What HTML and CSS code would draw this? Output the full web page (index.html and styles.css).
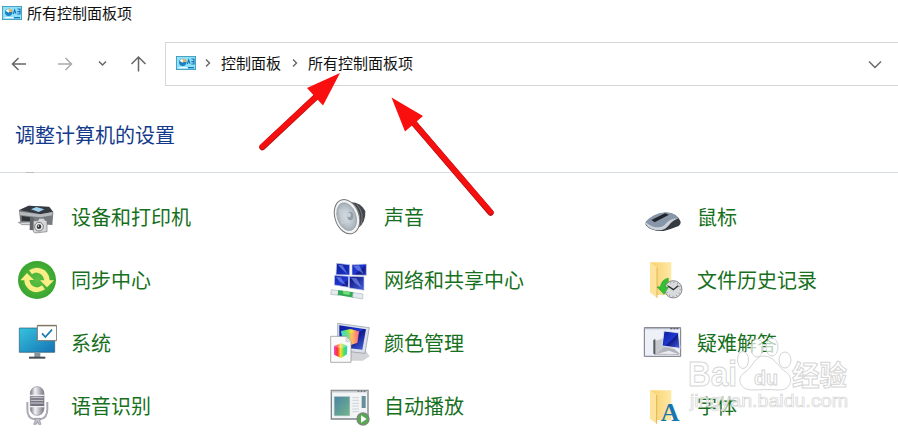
FILE: index.html
```html
<!DOCTYPE html>
<html lang="zh-CN">
<head>
<meta charset="utf-8">
<title>所有控制面板项</title>
<link rel="stylesheet" href="styles.css">
</head>
<body>
<svg class="defs" width="0" height="0" aria-hidden="true">
  <defs>
    <symbol id="panel" viewBox="0 0 60 42">
      <rect x="1" y="1" width="58" height="40" fill="#8fe0fa" stroke="#3794b8" stroke-width="3"/>
      <circle cx="20" cy="19" r="11" fill="#1c7fc4"/>
      <path d="M21 19V7a12 12 0 0 1 10 10z" fill="#f4b64a"/>
      <path d="M21 20l-10-5a11 11 0 0 1 9-7z" fill="#fff"/>
      <path d="M34 24l4-12 4 11M46 9h8v8h-8M46 24h8v-7" stroke="#1675b5" stroke-width="3.500" fill="none"/>
      <path d="M8 35h26" stroke="#fff" stroke-width="3"/>
      <path d="M36 35h18" stroke="#1779b5" stroke-width="4"/>
    </symbol>
    <linearGradient id="blue" x1="0" y1="0" x2="1" y2="1"><stop stop-color="#0a1a9a"/><stop offset=".5" stop-color="#2038d0"/><stop offset=".55" stop-color="#101a8c"/><stop offset="1" stop-color="#4c68e0"/></linearGradient>
    <linearGradient id="metal"><stop stop-color="#777780"/><stop offset=".35" stop-color="#f4f4f8"/><stop offset="1" stop-color="#777783"/></linearGradient>
    <linearGradient id="screen" x1="0" y1="0" x2="1" y2="1"><stop stop-color="#35c3de"/><stop offset="1" stop-color="#1573b4"/></linearGradient>
    <linearGradient id="folder"><stop stop-color="#f6d16d"/><stop offset="1" stop-color="#ffe9a6"/></linearGradient>
    <linearGradient id="rainbow"><stop stop-color="#36d9e8"/><stop offset=".3" stop-color="#68e65a"/><stop offset=".6" stop-color="#ffe33f"/><stop offset="1" stop-color="#f0438a"/></linearGradient>
    <linearGradient id="rainbow2"><stop stop-color="#e84bd8"/><stop offset=".25" stop-color="#fb3030"/><stop offset=".5" stop-color="#ffe02e"/><stop offset=".75" stop-color="#4be05a"/><stop offset="1" stop-color="#37c8d8"/></linearGradient>
    <linearGradient id="teal" x1="0" y1="0" x2="1" y2="1"><stop stop-color="#4a83a5"/><stop offset="1" stop-color="#72b58a"/></linearGradient>
    <radialGradient id="cone"><stop stop-color="#dfe8ee"/><stop offset="1" stop-color="#a5afb7"/></radialGradient>
    <radialGradient id="green"><stop stop-color="#5cc043"/><stop offset="1" stop-color="#39a52f"/></radialGradient>
  </defs>
</svg>

<header class="titlebar">
  <svg class="panel-icon"><use href="#panel"/></svg>
  <span>所有控制面板项</span>
</header>

<nav class="toolbar">
  <svg class="nav-icons" viewBox="0 0 165 44">
    <g fill="none" stroke-width="1.500">
      <path d="M26 22H12.500M18.500 16l-6 6 6 6" stroke="#666"/>
      <path d="M58 22H71.500M65.500 16l6 6-6 6" stroke="#aaa"/>
      <path d="M99 19.500l3.500 3.500 3.500-3.500" stroke="#666"/>
      <path d="M138.500 29.500V15M131.500 22l7-7 7 7" stroke="#666"/>
    </g>
  </svg>
  <div class="address">
    <svg class="panel-icon"><use href="#panel"/></svg>
    <svg class="sep" viewBox="0 0 6 10"><path d="M1 1.500L4.500 5 1 8.500"/></svg>
    <span>控制面板</span>
    <svg class="sep sep-second" viewBox="0 0 6 10"><path d="M1 1.500L4.500 5 1 8.500"/></svg>
    <span>所有控制面板项</span>
    <svg class="dropdown" viewBox="0 0 14 10"><path d="M1 1.500l6 6 6-6"/></svg>
  </div>
</nav>

<section class="heading"><h1>调整计算机的设置</h1></section>

<main class="items">
  <a class="item">
    <svg viewBox="0 0 120 120">
      <path d="M6 39L34 26 97 29 109 45 106 84 10 78z" fill="#777b80"/>
      <path d="M8 39L36 26 96 30 108 45 70 52z" fill="#34393f"/>
      <path d="M42 37l16-7 24 7-17 8z" fill="#9fd2ef"/>
      <path d="M8 44l62 8 36-7v10l-36 6-62-7z" fill="#b6b9bc"/>
      <path d="M14 57l26 4v12l-26-2z" fill="#303338"/>
      <path d="M4 76l34-1 10 8H15z" fill="#d8dadd" stroke="#777" stroke-width="2"/>
      <path d="M39 60l11 2 4 38-16-1z" fill="#606369"/>
      <path d="M49 72l14-1 4-7h13l4 6 6 1v33l-36 4-5-4z" fill="#d5d6d8" stroke="#777" stroke-width="2"/>
      <circle cx="66" cy="89" r="13" fill="#ececee" stroke="#777" stroke-width="3"/>
      <circle cx="66" cy="89" r="7" fill="#383b40"/><circle cx="64" cy="87" r="2" fill="#fff"/>
    </svg>
    <span>设备和打印机</span>
  </a>
  <a class="item">
    <svg viewBox="0 0 120 120">
      <path d="M54 16Q91 12 106 42 108 76 84 94L58 104z" fill="#42454a"/>
      <path d="M70 20q28 29 15 73M80 22q25 27 12 64" fill="none" stroke="#777b80" stroke-width="3"/>
      <ellipse cx="51" cy="59" rx="36" ry="53" transform="rotate(-19 51 59)" fill="#f2f3f4" stroke="#777" stroke-width="3"/>
      <ellipse cx="50" cy="59" rx="28" ry="43" transform="rotate(-19 50 59)" fill="url(#cone)" stroke="#999fa5" stroke-width="2"/>
      <path d="M25 35l36 8v28L34 84z" fill="#c8d0d6" opacity=".6"/>
      <ellipse cx="61" cy="57" rx="9" ry="13" fill="#929da6"/><ellipse cx="57" cy="54" rx="5" ry="7" fill="#cbd6de"/>
    </svg>
    <span>声音</span>
  </a>
  <a class="item">
    <svg viewBox="0 0 120 120">
      <path d="M8 76Q30 50 66 47 102 46 113 74q1 8-6 13-22 9-45 15Q24 104 8 84z" fill="#363b42"/>
      <path d="M8 74Q30 50 66 46 90 44 108 64 84 66 72 80 60 96 44 93 18 90 8 74z" fill="#8797a9"/>
      <path d="M8 75q18 17 38 16 14 0 24-13 12-14 37-14-19 7-28 19-13 17-30 17Q20 100 8 81z" fill="#c9d0d7"/>
      <path d="M25 69l41-20 12 4-43 23z" fill="#22262c"/>
    </svg>
    <span>鼠标</span>
  </a>

  <a class="item">
    <svg viewBox="0 0 120 120">
      <circle cx="60" cy="60" r="57" fill="url(#green)"/>
      <g fill="#fbee86">
        <path d="M36 31Q60 15 83 31q14 12 15 30h13L90 82 69 61h13Q79 41 60 38q-8-1-15 5z"/>
        <path d="M84 88Q60 105 37 89 22 77 22 61H10L30 39 51 60H37q3 19 21 22 9 1 17-6z"/>
      </g>
    </svg>
    <span>同步中心</span>
  </a>
  <a class="item">
    <svg viewBox="0 0 120 120">
      <g fill="url(#blue)" stroke="#c4cbe5" stroke-width="2">
        <path d="M20 10l39 4v31l-41-1zM66 14l43-2v34l-43-1zM14 46l42 3-1 33-42-7zM58 49l44 1v41l-44-7z"/>
      </g>
      <path d="M23 14l15 2 14 26-16-14zM69 17l18-1 14 26-22-14zM18 51l14 1 15 23-18-10zM62 53l17 1 16 29-21-15z" fill="#8ea4f4" opacity=".55"/>
      <path d="M4 89l24 3-1 14-25-3z" fill="#e4ebee" stroke="#a9b7bd" stroke-width="2"/>
      <path d="M25 90l46 7v16l-48-8z" fill="#31a957"/><path d="M39 93l20 3v9l-19-3z" fill="#78df7a"/>
      <path d="M69 98l30 4-1 15-30-5z" fill="#e4ebee" stroke="#a9b7bd" stroke-width="2"/>
    </svg>
    <span>网络和共享中心</span>
  </a>
  <a class="item">
    <svg viewBox="0 0 120 120">
      <path d="M22 7h63v98H38L22 97z" fill="url(#folder)"/><path d="M22 7l20 16v91L22 98z" fill="#ffe39b"/><path d="M42 23v90" stroke="#deb657" stroke-width="3"/>
      <circle cx="91" cy="88" r="26" fill="#d9dadc" stroke="#888b8f" stroke-width="3"/>
      <circle cx="91" cy="88" r="21" fill="none" stroke="#555" stroke-width="3" stroke-dasharray="2 9"/>
      <path d="M75 78l16 11 15-12" fill="none" stroke="#292d32" stroke-width="4"/>
      <path d="M76 54q-21 5-24 26l-10 1 21 22 14-22H66q2-11 10-16z" fill="#36be36" stroke="#299b2b" stroke-width="1.500"/>
    </svg>
    <span>文件历史记录</span>
  </a>

  <a class="item">
    <svg viewBox="0 0 120 120">
      <path d="M7 15h106v73H7z" fill="url(#screen)" stroke="#28586c" stroke-width="2"/>
      <path d="M52 89h18v13H52z" fill="#87959d"/><path d="M36 101h49v6H36z" fill="#454c52"/>
      <path d="M61 7h58v46H61z" fill="#fff" stroke="#7b776b" stroke-width="3"/><path d="M62 8h56" stroke="#807865" stroke-width="4"/>
      <path d="M75 31l10 11 20-22" fill="none" stroke="#1679b3" stroke-width="5"/>
    </svg>
    <span>系统</span>
  </a>
  <a class="item">
    <svg viewBox="0 0 120 120">
      <path d="M60 85l46-4 13 19-20 13H46z" fill="#d2d4d7"/>
      <path d="M23 1l95 13-13 77-82-9z" fill="#dce1ea" stroke="#8d929d" stroke-width="2"/>
      <path d="M28 7l80 12-11 61-69-8z" fill="url(#blue)"/>
      <path d="M33 24l28-6 26 7-5 34-23 8-19-9z" fill="url(#rainbow)"/><path d="M33 24l26 7v35l-19-8z" fill="#62d6b4" opacity=".5"/><path d="M59 31l28-6-5 34-23 8z" fill="#ff9980" opacity=".5"/>
      <path d="M2 40h46l15 15v63H2z" fill="#fafafa" stroke="#888" stroke-width="2"/><path d="M48 40v16h15" fill="#e2e2e2" stroke="#aaa"/>
      <path d="M12 69l22-8 18 8-1 25-18 11-21-10z" fill="url(#rainbow2)"/><path d="M12 69l22-8 18 8-19 8z" fill="#fff" opacity=".3"/>
    </svg>
    <span>颜色管理</span>
  </a>
  <a class="item">
    <svg viewBox="0 0 120 120">
      <path d="M4 14h109v86H4z" fill="#edf0f7" stroke="#737581" stroke-width="3"/><path d="M5 17h107" stroke="#b3b8c5" stroke-width="4"/><path d="M82 17h25" stroke="#555b70" stroke-width="4" stroke-dasharray="6 3"/>
      <path d="M34 54l32-9 20 28-15 23H36z" fill="#c6c8ce"/><path d="M31 51l6-3v47l-6-3z" fill="#555963"/>
      <path d="M63 24l43 5 5 47-54-7z" fill="url(#blue)" stroke="#dce1ed" stroke-width="3"/>
      <path d="M63 73l30 4 18 15-5 4-66-2z" fill="#b2b4bb"/><path d="M44 92l34-9 27 10z" fill="#ececef"/>
    </svg>
    <span>疑难解答</span>
  </a>

  <a class="item">
    <svg viewBox="0 0 120 120">
      <path d="M31 48v20q0 28 19 31h21q20-3 20-31V48" fill="none" stroke="#aaa9b5" stroke-width="6"/>
      <rect x="40" y="2" width="41" height="86" rx="20" fill="url(#metal)" stroke="#8b8995" stroke-width="2"/>
      <path d="M41 31h39v29H41z" fill="#75737e"/><path d="M42 35h37M42 43h37M42 51h37" stroke="#d2d1da" stroke-width="3"/>
      <path d="M39 28h43M39 62h43" stroke="#efeff3" stroke-width="4"/>
      <path d="M54 97h15v9l3 9h-8l-3-9-3 9h-8l4-10z" fill="#c1c0cb" stroke="#8c8b95" stroke-width="2"/>
    </svg>
    <span>语音识别</span>
  </a>
  <a class="item">
    <svg viewBox="0 0 120 120">
      <path d="M4 13h110v86H4z" fill="#f2f4f5" stroke="#7e8589" stroke-width="4"/><path d="M5 17h108" stroke="#c5cbd0" stroke-width="5"/><path d="M83 16h24" stroke="#59636a" stroke-width="3" stroke-dasharray="5 4"/>
      <path d="M13 32h46v57H13z" fill="url(#teal)" stroke="#8ea9a4"/><path d="M67 35h20M67 43h20M67 52h20M67 60h20M67 69h20M67 77h20" stroke="#ccd3d8" stroke-width="3"/><path d="M95 30h12v36H95z" fill="#668d9a"/>
      <circle cx="99" cy="99" r="18" fill="#58a753" stroke="#798b78" stroke-width="4"/><path d="M93 88l17 11-17 11z" fill="#fff"/>
    </svg>
    <span>自动播放</span>
  </a>
  <a class="item">
    <svg viewBox="0 0 120 120">
      <path d="M22 13h63v89H38l-16-4z" fill="url(#folder)"/><path d="M22 13l19 14v87L22 99z" fill="#ffe39b"/><path d="M41 27v86" stroke="#deb657" stroke-width="3"/>
      <text class="font-letter" x="53" y="105" textLength="56" lengthAdjust="spacingAndGlyphs">A</text>
    </svg>
    <span>字体</span>
  </a>
</main>

<svg class="arrows" viewBox="0 0 898 433">
  <g stroke="#a80d0d" stroke-width="6.500" stroke-linecap="round"><path d="M262.500 147L318 95M490.500 212.500L413 122"/></g>
  <g stroke="#f50f0f" stroke-width="5.500" stroke-linecap="round"><path d="M262.500 146.500L318 95M490.500 212L413 122"/></g>
  <path d="M340 73L307 88 323 105.500zM391.500 97.500L423 116 405 131.500z" fill="#fa0f0f"/>
</svg>

<svg class="watermark" viewBox="0 0 170 84">
  <g class="mark">
    <text class="wm-latin" x="5" y="55" textLength="49" lengthAdjust="spacingAndGlyphs">Bai</text>
    <ellipse cx="60" cy="29" rx="5.500" ry="8.500"/><ellipse cx="74" cy="17" rx="6" ry="9"/><ellipse cx="89" cy="16" rx="6" ry="9"/><ellipse cx="102" cy="29" rx="6" ry="8"/>
    <path d="M81 25c-10 0-11 12-20 17-8 6-4 17 8 17 8 0 17-1 26 0 12 1 17-11 8-18-8-5-12-16-22-16z"/>
    <text class="wm-du" x="71" y="54" textLength="24" lengthAdjust="spacingAndGlyphs">du</text>
    <text class="wm-cjk" x="109" y="55" textLength="55" lengthAdjust="spacingAndGlyphs">经验</text>
    <text class="wm-url" x="7" y="76" textLength="158" lengthAdjust="spacingAndGlyphs">jingyan.baidu.com</text>
  </g>
</svg>
</body>
</html>
```
FILE: styles.css
```css
* { box-sizing: border-box; }
body {
  margin: 0;
  width: 898px;
  height: 433px;
  overflow: hidden;
  position: relative;
  background: #fff;
  color: #111;
  font-family: "Noto Sans CJK SC", sans-serif;
  font-size: 15px;
}
svg { display: block; flex: none; }
.defs { position: absolute; }
.titlebar {
  height: 28px;
  padding: 0 0 2px 2px;
  display: flex;
  align-items: center;
  gap: 5px;
  line-height: 22px;
}
.panel-icon { width: 20px; height: 14px; }
.toolbar { display: flex; margin-top: 14px; height: 44px; }
.nav-icons { width: 165px; height: 44px; }
.address {
  flex: 1;
  display: flex;
  align-items: center;
  padding: 0 16px 2px 10px;
  border: 1px solid #d4d6d8;
  border-right: 0;
  line-height: 22px;
}
.sep, .dropdown { fill: none; stroke: #666; stroke-width: 1.4; }
.sep { width: 6px; height: 10px; margin: 0 10px 0 9px; }
.sep-second { margin: 0 10px 0 11px; }
.dropdown { width: 14px; height: 10px; margin: 3px 0 0 auto; }
.heading {
  height: 87px;
  padding: 35px 0 0 15px;
  border-bottom: 1px solid #d8dde1;
}
h1 {
  margin: 0;
  font-size: 20px;
  line-height: 28px;
  font-weight: 400;
  color: #143a8c;
}
/* The sliver of the row scrolled under the heading. */
.heading::after {
  content: "";
  display: block;
  width: 8px;
  height: 1px;
  margin: 23px 0 0 11px;
  background: #b9bdc0;
}
.items {
  display: grid;
  grid-template-columns: 313px 313px 1fr;
  grid-auto-rows: 63px;
  height: 260px;
  padding: 12px 0 0 17px;
  overflow: hidden;
}
.item {
  display: flex;
  align-items: center;
  gap: 14px;
  color: #167020;
  font-size: 20px;
  line-height: 28px;
  white-space: nowrap;
}
.item svg { width: 40px; height: 40px; }
.font-letter {
  font: bold 78px "Liberation Serif", serif;
  fill: #1976ad;
}
.arrows { position: absolute; inset: 0; width: 898px; height: 433px; }
.watermark { position: absolute; left: 683px; top: 331px; width: 170px; height: 84px; }
.mark { fill: #fff; fill-opacity: .7; stroke: #d5d5d5; stroke-width: 1; }
.wm-latin { font: bold 35px "Liberation Sans", sans-serif; }
.wm-du { font: bold 20px "Liberation Sans", sans-serif; }
.wm-cjk { font: bold 28px "Noto Sans CJK SC", sans-serif; }
.wm-url { font: 19px "Liberation Sans", sans-serif; stroke-width: .7; }
```
